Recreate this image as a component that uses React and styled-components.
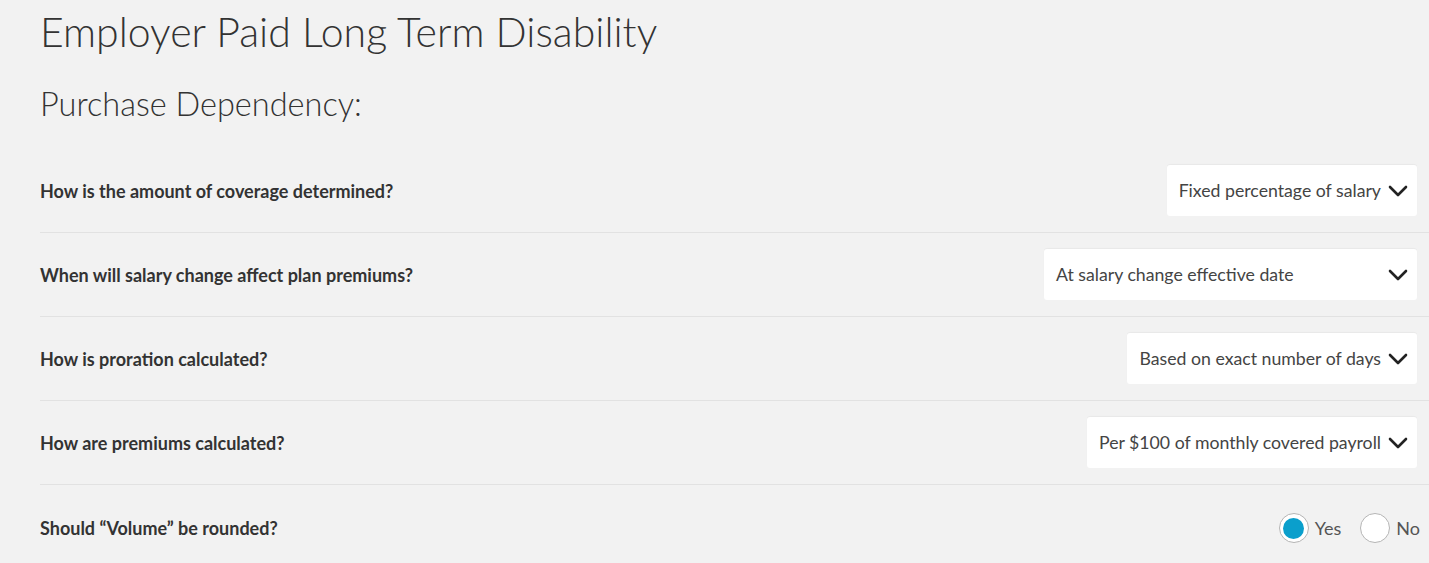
import React, { useState } from 'react';
import styled, { createGlobalStyle } from 'styled-components';

const GlobalStyle = createGlobalStyle`
    html, body {
        margin: 0;
        background: #f2f2f2;
        font-family: Lato, "Open Sans", sans-serif;
        color: #333;
    }
`;

const Page = styled.div`
    padding: 7px 0 0 40px;
`;

const Title = styled.h1`
    margin: 0;
    font-size: 41px;
    font-weight: 300;
    line-height: 1.2;
    color: #333;
`;

const Subtitle = styled.h2`
    margin: 28px 0 26px;
    font-size: 32.5px;
    font-weight: 300;
    line-height: 1.2;
    color: #333;
`;

const Row = styled.div`
    display: flex;
    align-items: center;
    justify-content: space-between;
    padding: 16px 9px ${props => props.last ? '13px' : '16px'} 0;
    border-bottom: ${props => props.last ? 'none' : '1px solid #e2e2e2'};
`;

const Question = styled.div`
    font-size: 18px;
    font-weight: 700;
    color: #333;
`;

const Select = styled.div`
    display: flex;
    align-items: center;
    justify-content: space-between;
    gap: 7px;
    box-sizing: border-box;
    height: 51px;
    width: ${props => props.width || 'auto'};
    margin-right: 3px;
    padding: 0 9px 0 12px;
    background: #fff;
    border-radius: 3px;
    box-shadow: 0 -1px 1px rgba(0, 0, 0, 0.04);
    font-size: 17.7px;
    color: #444;
    cursor: pointer;
`;

const Chevron = () => (
    <svg width="20" height="12" viewBox="0 0 20 12">
        <path d="M2 2 L10 10 L18 2" fill="none" stroke="#222" strokeWidth="2.6" strokeLinecap="round" strokeLinejoin="round" />
    </svg>
);

const RadioGroup = styled.div`
    display: flex;
    align-items: center;
    gap: 19px;
    height: 54px;
`;

const RadioLabel = styled.label`
    display: flex;
    align-items: center;
    gap: 6px;
    font-size: 18px;
    color: #555;
    cursor: pointer;
`;

const RadioCircle = styled.span`
    box-sizing: border-box;
    width: 30px;
    height: 30px;
    border-radius: 50%;
    border: 1.5px solid #b5b5b5;
    background: #fff;
    display: flex;
    align-items: center;
    justify-content: center;

    &::after {
        content: '';
        width: 21px;
        height: 21px;
        border-radius: 50%;
        background: ${props => props.checked ? '#0a9fcc' : 'transparent'};
    }
`;

const questions = [
    { q: 'How is the amount of coverage determined?', a: 'Fixed percentage of salary' },
    { q: 'When will salary change affect plan premiums?', a: 'At salary change effective date', width: '373px' },
    { q: 'How is proration calculated?', a: 'Based on exact number of days' },
    { q: 'How are premiums calculated?', a: 'Per $100 of monthly covered payroll' },
];

export default function App() {
    const [rounded, setRounded] = useState(true);
    return (
        <Page>
            <GlobalStyle />
            <Title>Employer Paid Long Term Disability</Title>
            <Subtitle>Purchase Dependency:</Subtitle>
            {questions.map(item => (
                <Row key={item.q}>
                    <Question>{item.q}</Question>
                    <Select width={item.width}>
                        <span>{item.a}</span>
                        <Chevron />
                    </Select>
                </Row>
            ))}
            <Row last>
                <Question>Should “Volume” be rounded?</Question>
                <RadioGroup>
                    <RadioLabel onClick={() => setRounded(true)}>
                        <RadioCircle checked={rounded} />
                        Yes
                    </RadioLabel>
                    <RadioLabel onClick={() => setRounded(false)}>
                        <RadioCircle checked={!rounded} />
                        No
                    </RadioLabel>
                </RadioGroup>
            </Row>
        </Page>
    );
}
